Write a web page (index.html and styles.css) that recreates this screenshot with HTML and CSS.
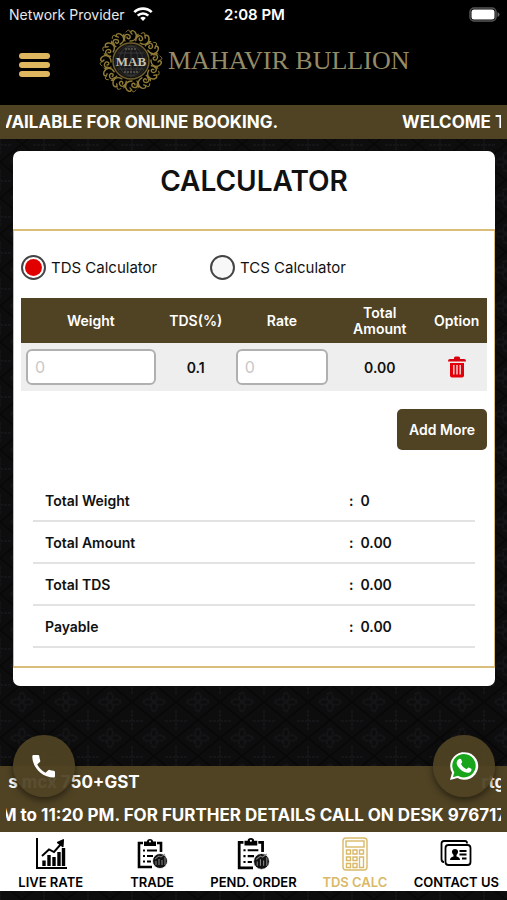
FILE: index.html
```
<!DOCTYPE html>
<html lang="en">
<head>
  <meta charset="utf-8">
  <meta name="viewport" content="width=device-width, initial-scale=1">
  <title>Mahavir Bullion - Calculator</title>
  <link rel="stylesheet" href="styles.css">
</head>
<body>

  <div class="statusbar">
    <span class="carrier">Network Provider
      <svg width="20" height="14" viewBox="0 0 20 14" fill="none" stroke="#fff" stroke-width="2.6"><path d="M1.3 5.2a12.3 12.3 0 0 1 17.4 0M4.7 8.7a7.5 7.5 0 0 1 10.6 0"/><path d="M10 14l-2.8-2.9a4 4 0 0 1 5.6 0z" fill="#fff" stroke="none"/></svg>
    </span>
    <span class="time">2:08 PM</span>
    <span class="battery">
      <svg width="31" height="15" viewBox="0 0 31 15"><rect x="1" y="1" width="26" height="13" rx="4" fill="none" stroke="#555" stroke-width="1.5"/><rect x="2.5" y="2.5" width="23" height="10" rx="2.5" fill="#fff"/><path d="M28.500 5v5q2-1 2-2.500t-2-2.500z" fill="#666"/></svg>
    </span>
  </div>

  <header class="header">
    <button class="menu" aria-label="Menu"><span></span><span></span><span></span></button>
    <a class="brand" href="#">
      <svg class="seal" width="66" height="66" viewBox="-33 -33 66 66">
        <defs>
          <g id="swirl" fill="none" stroke="#8f7b35" stroke-linecap="round">
            <path stroke-width="1.400" d="M-6 -20c-3 -5 2 -9 5 -5c1 3 -3 4 -3 1M-1 -20c6 0 8 -5 5 -9c-3 -3 -6 0 -3 2"/>
            <path stroke-width="1" d="M-5 -29c2 -3 4 -2 4 0M5 -22c2 -1 3 -3 1 -4M-8 -25l1 -2"/>
          </g>
        </defs>
        <use href="#swirl"/>
        <use href="#swirl" transform="rotate(30)"/>
        <use href="#swirl" transform="rotate(60)"/>
        <use href="#swirl" transform="rotate(90)"/>
        <use href="#swirl" transform="rotate(120)"/>
        <use href="#swirl" transform="rotate(150)"/>
        <use href="#swirl" transform="rotate(180)"/>
        <use href="#swirl" transform="rotate(210)"/>
        <use href="#swirl" transform="rotate(240)"/>
        <use href="#swirl" transform="rotate(270)"/>
        <use href="#swirl" transform="rotate(300)"/>
        <use href="#swirl" transform="rotate(330)"/>
        <circle r="18" fill="#111" stroke="#6f5f30" stroke-width="1.500"/>
        <circle r="16" fill="#19191b" stroke="#2a2619"/>
        <g fill="none" stroke="#3c3c3e" stroke-width=".8"><ellipse rx="7" ry="15"/><ellipse rx="12" ry="15"/><path d="M0 -15v30M-13 -8h26M-13 8h26"/></g>
        <path d="M-6 -12h12M-7 11h14" stroke="#5c584c" stroke-width="1.500" stroke-dasharray="2 1"/>
        <text class="seal-text" y="5" text-anchor="middle">MAB</text>
      </svg>
      <span class="brand-name">MAHAVIR BULLION</span>
    </a>
  </header>

  <div class="ticker">
    <div class="line line-top">
      <span class="tail">VAILABLE FOR ONLINE BOOKING.</span>
      <span class="head">WELCOME TO</span>
    </div>
  </div>

  <main class="main">
    <section class="card">
      <h1>CALCULATOR</h1>
      <form class="panel">
        <div class="types">
          <label><input type="radio" name="type" checked> TDS Calculator</label>
          <label><input type="radio" name="type"> TCS Calculator</label>
        </div>

        <table class="items">
          <thead>
            <tr>
              <th class="c-weight">Weight</th>
              <th class="c-tds">TDS(%)</th>
              <th class="c-rate">Rate</th>
              <th class="c-total">Total Amount</th>
              <th class="c-option">Option</th>
            </tr>
          </thead>
          <tbody>
            <tr>
              <td><input type="text" placeholder="0" aria-label="Weight"></td>
              <td>0.1</td>
              <td><input type="text" placeholder="0" aria-label="Rate"></td>
              <td>0.00</td>
              <td>
                <button type="button" class="delete" aria-label="Delete">
                  <svg width="18" height="22" viewBox="0 0 18 22"><path d="M6 3V2Q6 .5 7.500 .5h3Q12 .5 12 2v1h4q2 0 2 2v.5H0V5q0-2 2-2z" fill="#d8000c"/><path d="M2 7h14v12.500q0 2-2 2H4q-2 0-2-2z" fill="#e3000b"/><path d="M5.800 9v9.500M9 9v9.500M12.200 9v9.500" stroke="#f3c9cb" stroke-width="1.500"/></svg>
                </button>
              </td>
            </tr>
          </tbody>
        </table>

        <div class="actions"><button type="button" class="add">Add More</button></div>

        <dl class="summary">
          <div><dt>Total Weight</dt><dd><span>:</span>0</dd></div>
          <div><dt>Total Amount</dt><dd><span>:</span>0.00</dd></div>
          <div><dt>Total TDS</dt><dd><span>:</span>0.00</dd></div>
          <div><dt>Payable</dt><dd><span>:</span>0.00</dd></div>
        </dl>
      </form>
    </section>
  </main>

  <footer class="footer">
    <a class="fab fab-call" href="tel:97671" aria-label="Call">
      <svg width="24" height="24" viewBox="0 0 24 24" fill="#fff"><path d="M1.500 1H6q1.200 0 1.300 1.200.2 2.300.9 4.300.3.800-.3 1.400L5.200 10.500q3 5.500 8.400 8.300l2.600-2.600q.6-.6 1.400-.3 2 .6 4.200.8 1.200.2 1.200 1.300v4.300q0 1.200-1.200 1.200C10 23.500.3 13.500.3 2.300.3 1 1.500 1 1.500 1z"/></svg>
    </a>
    <a class="fab fab-whatsapp" href="#" aria-label="WhatsApp">
      <svg width="30" height="30" viewBox="0 0 30 30"><path d="M1 29l2-7.300A14 13.800 0 1 1 8.400 27z" fill="#fff"/><path d="M3.900 26.200l1.400-4.900a11.700 11.700 0 1 1 3.700 3.500z" fill="#18a51c"/><path d="M10.600 7.700c.7-.2 1.300 0 1.600.7l1 2.400c.2.600-.8 1.700-1.200 2.200 1.300 2.500 3.200 4.200 5.700 5.200.5-.5 1.400-2 2-1.800l2.600 1.300c.5.400.1 2-.4 2.800-1.300 1.600-3.600 1.800-6.500.6-3.500-1.500-6.300-4.400-7.500-7.500-.7-2.300.3-5.200 2.700-5.900z" fill="#fff"/></svg>
    </a>

    <div class="ticker">
      <div class="line line-mcx">
        <span class="tail">s mcx 750+GST</span>
        <span class="head">rtgs</span>
      </div>
      <div class="line line-desk">
        <span>M to 11:20 PM. FOR FURTHER DETAILS CALL ON DESK 976717</span>
      </div>
    </div>

    <nav class="tabs">
      <a href="#">
        <svg width="32" height="32" viewBox="0 0 32 32" fill="none" stroke="#000"><path d="M2 0v30h30" stroke-width="2"/><path d="M9 22.500V28M14 17v11M19 19v9M24 14v14M28.500 10v18" stroke-width="3.400"/><path d="M7 18l7-6.500 5 2.500 7-8" stroke-width="1.900"/><path d="M22 4.500l6.500-3-.5 7.500z" fill="#000"/></svg>
        LIVE RATE
      </a>
      <a href="#">
        <svg width="32" height="32" viewBox="0 0 32 32" fill="none" stroke="#000"><use href="#clipboard"/></svg>
        TRADE
      </a>
      <a href="#">
        <svg width="34" height="32" viewBox="0 0 32 32" fill="none" stroke="#000">
          <g id="clipboard">
            <path d="M7 5H3v24h13M21 5h4v9" stroke-width="2.600"/>
            <path d="M8 3.500h3Q11 1 14 1t3 2.500h3V8H8z" fill="#000" stroke="none"/>
            <circle cx="14" cy="3.500" r="1" fill="#fff" stroke="none"/>
            <path d="M7 12.500h2M11 12.500h10M7 18h2M11 18h6M7 23.500h2M11 23.500h4" stroke-width="2"/>
            <circle cx="24" cy="23" r="7.500" fill="#111" stroke="#fff" stroke-width=".8"/>
            <path d="M20 27v-4M23 27v-6M26 27v-5M29 27v-8M19 21l4-3 2 1 4-3" stroke="#888" stroke-width="1"/>
          </g>
        </svg>
        PEND. ORDER
      </a>
      <a href="#" class="active">
        <svg width="26" height="34" viewBox="0 0 26 34" fill="none" stroke="#d9b968" stroke-width="1.400"><rect x="1" y="1" width="24" height="32" rx="3"/><rect x="4" y="4" width="18" height="6"/><path d="M4.500 13h4v4h-4zM11 13h4v4h-4zM17.500 13h4v4h-4zM4.500 20h4v3.500h-4zM11 20h4v3.500h-4zM4.500 26.500h4v4h-4zM11 26.500h4v4h-4zM17.500 20h4v10.500h-4z"/></svg>
        TDS CALC
      </a>
      <a href="#">
        <svg width="32" height="30" viewBox="0 0 32 30" fill="none" stroke="#000" stroke-width="1.800"><path d="M27 4.500V4q0-2-2-2H4Q1.500 2 1.500 4.500V20Q1.500 23 4 23"/><rect x="5.500" y="6" width="25" height="20" rx="3"/><path d="M10 21q0-3 3.500-3.500V16q-2-1.500-1.500-4 .5-2 3-2t3 2q.5 2.500-1.500 4v1.500Q20 18 20 21z" fill="#000" stroke="none"/><path d="M19.500 12h7M19.500 15.500h7M22 19.500h4.500"/></svg>
        CONTACT US
      </a>
    </nav>
  </footer>

</body>
</html>
```
FILE: styles.css
```
* {
  box-sizing: border-box;
}

body {
  margin: 0;
  min-height: 100vh;
  padding-bottom: 9px;
  display: flex;
  flex-direction: column;
  background: #0d0d0e url("data:image/svg+xml,%3Csvg xmlns='http://www.w3.org/2000/svg' width='44' height='36'%3E%3Cg fill='none' stroke='%23080808' stroke-width='2'%3E%3Cpath d='M22 0L44 18L22 36L0 18Z'/%3E%3C/g%3E%3Cg fill='none' stroke='%23151517' stroke-width='2'%3E%3Cpath d='M22 8q6 5 0 10q-6-5 0-10M22 28q6-5 0-10q-6 5 0 10M11 18q5-6 11 0q-6 6-11 0M33 18q-5-6-11 0q6 6 11 0M0 10v-10M44 10v-10M0 26v10M44 26v10M0 1h11M33 1h11' stroke-dasharray='3 1'/%3E%3C/g%3E%3C/svg%3E");
  color: #111;
  font-family: Inter, "Liberation Sans", sans-serif;
  font-size: 14px;
}

a {
  color: inherit;
  text-decoration: none;
}

button {
  border: 0;
  padding: 0;
  font: inherit;
  cursor: pointer;
}

.statusbar {
  display: grid;
  grid-template-columns: 1fr auto 1fr;
  align-items: center;
  height: 28px;
  padding: 0 7px 0 9px;
  background: #000;
  color: #e8e8e8;
}

.carrier {
  display: flex;
  align-items: center;
  gap: 8px;
}

.time {
  color: #fff;
  font-size: 15px;
  font-weight: 600;
}

.battery {
  display: flex;
  justify-content: flex-end;
}

.header {
  display: flex;
  align-items: center;
  gap: 48px;
  height: 77px;
  padding: 0 19px 4px;
  background: #000;
}

.menu {
  display: flex;
  flex-direction: column;
  gap: 3px;
  background: none;
}

.menu span {
  width: 31px;
  height: 6px;
  border-radius: 3px;
  background: #deb65f;
}

.brand {
  display: flex;
  align-items: center;
  gap: 4px;
  padding-bottom: 8px;
}

.seal-text {
  fill: #c9c3b0;
  font: bold 13px "Liberation Serif", serif;
}

.brand-name {
  color: #958b66;
  font: 26px "Liberation Serif", serif;
  white-space: nowrap;
}

.ticker {
  padding: 0 6px;
  background: #504324;
  color: #fff;
  font-size: 17px;
  font-weight: 700;
}

.line {
  display: flex;
  height: 33px;
  line-height: 33px;
  overflow: hidden;
  white-space: nowrap;
}

.line-top {
  height: 34px;
  line-height: 34px;
}

.tail {
  display: flex;
  flex: none;
  justify-content: flex-end;
  overflow: hidden;
}

.line-top .tail {
  width: 55%;
  margin-right: 25%;
}

.line-mcx .tail {
  width: 27%;
  margin-right: 69%;
}

.line-desk {
  justify-content: center;
}

.main {
  flex: 1;
  padding: 12px 12px 80px 13px;
}

.card {
  padding-bottom: 18px;
  border-radius: 7px;
  background: #fff;
}

.card h1 {
  margin: 0;
  height: 78px;
  line-height: 60px;
  font-size: 28px;
  font-weight: 600;
  text-align: center;
}

.panel {
  padding: 24px 7px 18px;
  border: 1px solid #d9bd78;
  border-width: 2px 1px;
}

.types {
  display: flex;
  margin-bottom: 18px;
  font-size: 15px;
}

.types label {
  display: flex;
  align-items: center;
  gap: 5px;
  width: 189px;
}

.types input {
  appearance: none;
  width: 25px;
  height: 25px;
  margin: 0;
  padding: 2px;
  border: 2px solid #444;
  border-radius: 50%;
  background: #f8f8f8;
}

.types input:checked {
  background: #e00000 content-box;
}

.items {
  width: 100%;
  table-layout: fixed;
  border-collapse: collapse;
  font-weight: 600;
  text-align: center;
}

.items th {
  height: 45px;
  padding: 0;
  background: #504324;
  color: #fff;
  font-weight: 600;
  line-height: 16px;
}

.c-weight { width: 30%; }
.c-tds { width: 15%; }
.c-rate { width: 22%; }
.c-total { width: 20%; }
.c-option { width: 13%; }

.items .c-total {
  padding: 0 10px;
}

.items td {
  height: 48px;
  padding: 0 5px;
  background: #eee;
}

.items input {
  display: block;
  width: 100%;
  height: 36px;
  padding: 0 7px;
  border: 2px solid #b0b0b0;
  border-radius: 6px;
  background: #fff;
  font: 16px Inter, sans-serif;
}

.items input::placeholder {
  color: #c8c8c8;
}

.delete {
  display: block;
  margin: 0 auto;
  background: none;
}

.delete svg {
  display: block;
}

.actions {
  display: flex;
  justify-content: flex-end;
  margin: 18px 0 30px;
}

.add {
  width: 90px;
  height: 41px;
  border-radius: 5px;
  background: #504324;
  color: #fff;
  font-weight: 600;
}

.summary {
  margin: 0 12px;
  font-weight: 600;
}

.summary div {
  display: flex;
  align-items: center;
  height: 42px;
  padding-left: 12px;
  border-bottom: 2px solid #e2e2e2;
}

.summary dt {
  width: 304px;
}

.summary dd {
  display: flex;
  gap: 7px;
  margin: 0;
}

.footer {
  position: relative;
}

.fab {
  position: absolute;
  top: -31px;
  display: flex;
  align-items: center;
  justify-content: center;
  width: 62px;
  height: 62px;
  border-radius: 50%;
  background: rgba(80, 67, 36, 0.94);
  box-shadow: 0 3px 7px rgba(0, 0, 0, 0.5);
}

.fab-call {
  left: 13px;
}

.fab-whatsapp {
  right: 12px;
}

.tabs {
  display: grid;
  grid-template-columns: repeat(5, 1fr);
  height: 59px;
  background: #fff;
  color: #000;
  font-size: 13px;
  font-weight: 600;
}

.tabs a {
  display: flex;
  flex-direction: column;
  align-items: center;
  justify-content: space-between;
  padding: 5px 0 1px;
  white-space: nowrap;
}

.tabs svg {
  height: 34px;
}

.tabs .active {
  color: #d9b968;
}
```
